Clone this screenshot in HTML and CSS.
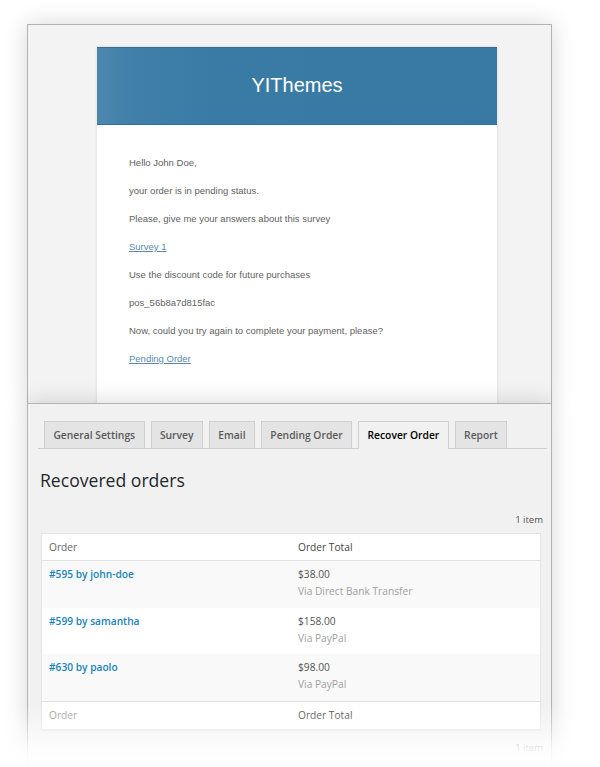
FILE: index.html
```html
<!DOCTYPE html>
<html>
<head>
    <title>Pending Order Survey</title>
    <link rel="stylesheet" href="styles.css">
</head>
<body>
    <div class="stage">
        <section class="shot shot-email">
            <div class="mail">
                <div class="mail-head">
                    <h1>YIThemes</h1>
                </div>
                <div class="mail-body">
                    <p>Hello John Doe,</p>
                    <p>your order is in pending status.</p>
                    <p>Please, give me your answers about this survey</p>
                    <p><a href="#">Survey 1</a></p>
                    <p>Use the discount code for future purchases</p>
                    <p>pos_56b8a7d815fac</p>
                    <p>Now, could you try again to complete your payment, please?</p>
                    <p><a href="#">Pending Order</a></p>
                </div>
            </div>
        </section>

        <section class="shot shot-admin">
            <nav class="tabs">
                <a class="tab" href="#">General Settings</a>
                <a class="tab" href="#">Survey</a>
                <a class="tab" href="#">Email</a>
                <a class="tab" href="#">Pending Order</a>
                <a class="tab active" href="#">Recover Order</a>
                <a class="tab" href="#">Report</a>
            </nav>

            <h2>Recovered orders</h2>
            <div class="count">1 item</div>

            <table class="orders">
                <thead>
                    <tr><th class="col-order">Order</th><th>Order Total</th></tr>
                </thead>
                <tbody>
                    <tr class="alt">
                        <td><a href="#">#595 by john-doe</a></td>
                        <td>$38.00<span class="via">Via Direct Bank Transfer</span></td>
                    </tr>
                    <tr>
                        <td><a href="#">#599 by samantha</a></td>
                        <td>$158.00<span class="via">Via PayPal</span></td>
                    </tr>
                    <tr class="alt">
                        <td><a href="#">#630 by paolo</a></td>
                        <td>$98.00<span class="via">Via PayPal</span></td>
                    </tr>
                </tbody>
                <tfoot>
                    <tr><th class="col-order">Order</th><th>Order Total</th></tr>
                </tfoot>
            </table>
            <div class="count count-bottom">1 item</div>
        </section>

        <div class="fade"></div>
    </div>
</body>
</html>
```

FILE: styles.css
```css
body {
    margin: 0;
    padding: 0;
    background-color: #fff;
}

.stage {
    position: relative;
    width: 600px;
    height: 767px;
    overflow: hidden;
    padding: 24px 0 0 27px;
    box-sizing: border-box;
}

.shot {
    width: 525px;
    box-sizing: border-box;
    border: 1px solid #b3b3b3;
    box-shadow: 0 0 22px rgba(0, 0, 0, 0.16);
}

/* email preview */

.shot-email {
    height: 379px;
    border-bottom: none;
    overflow: hidden;
    background-color: #f3f3f3;
    padding: 22px 0 0 69px;
}

.mail {
    width: 400px;
    height: 400px;
    background-color: #fff;
    box-shadow: 0 0 3px rgba(0, 0, 0, 0.12);
    font-family: "Liberation Sans", Arial, sans-serif;
}

.mail-head {
    height: 78px;
    box-sizing: border-box;
    border-top: 1px solid #3071a0;
    border-bottom: 1px solid #2d6f9c;
    background: linear-gradient(90deg, #4d87ae 0, #3f7fa8 10%, #3a7ba5 30%, #397aa4 100%);
    display: flex;
    align-items: center;
    justify-content: center;
}

.mail-head h1 {
    margin: 0 0 2px;
    font-size: 20px;
    font-weight: normal;
    color: #fff;
}

.mail-body {
    padding: 31px 32px 0;
    font-size: 9.5px;
    line-height: 14px;
    color: #5f5f5f;
}

.mail-body p {
    margin: 0 0 14px;
}

.mail-body a {
    color: #5c88ae;
}

/* admin screen */

.shot-admin {
    height: 380px;
    background-color: #f1f1f1;
    padding-top: 17px;
    font-family: "Open Sans", sans-serif;
    color: #444;
}

.tabs {
    display: flex;
    gap: 6px;
    margin: 0 4px 0 10px;
    padding-left: 6px;
    border-bottom: 1px solid #cfcfcf;
}

.tab {
    display: block;
    height: 26px;
    line-height: 26px;
    padding: 0 8.4px;
    margin-bottom: -1px;
    border: 1px solid #cfcfcf;
    border-bottom: none;
    background-color: #e4e4e4;
    font-size: 10.3px;
    font-weight: 600;
    color: #5a5a5a;
    text-decoration: none;
}

.tab.active {
    height: 27px;
    background-color: #f1f1f1;
    color: #000;
}

h2 {
    margin: 19px 0 0 12px;
    font-size: 17.6px;
    line-height: 24px;
    font-weight: normal;
    color: #23282d;
}

.count {
    margin: 21px 8px 0 0;
    text-align: right;
    font-size: 9.5px;
    line-height: 14px;
    color: #555;
}

.orders {
    width: 500px;
    margin: 6px 0 0 13px;
    border-collapse: collapse;
    table-layout: fixed;
    background-color: #fff;
    border: 1px solid #e5e5e5;
    box-shadow: 0 1px 1px rgba(0, 0, 0, 0.04);
    font-size: 10.2px;
    line-height: 17px;
}

.orders th {
    text-align: left;
    font-weight: normal;
    color: #444;
    padding: 5px 7px 4px;
}

.orders th.col-order {
    color: #666;
}

.orders thead th {
    border-bottom: 1px solid #e1e1e1;
}

.orders tfoot th {
    border-top: 1px solid #e1e1e1;
    padding: 5px 7px 5px;
}

.orders tfoot th.col-order {
    color: #999;
}

.orders td {
    vertical-align: top;
    padding: 5px 7px 7.6px;
    color: #555;
}

.orders tr.alt td {
    background-color: #f9f9f9;
}

.orders td a {
    color: #1a84b8;
    font-weight: 600;
    text-decoration: none;
}

.via {
    display: block;
    color: #a0a0a0;
}

.count-bottom {
    margin-top: 11px;
}

/* the screenshot fades out at the bottom */
.fade {
    position: absolute;
    left: 0;
    right: 0;
    bottom: 0;
    height: 62px;
    background: linear-gradient(rgba(255, 255, 255, 0) 0, rgba(255, 255, 255, 0.4) 35%, rgba(255, 255, 255, 0.85) 70%, #fff 100%);
}
```
